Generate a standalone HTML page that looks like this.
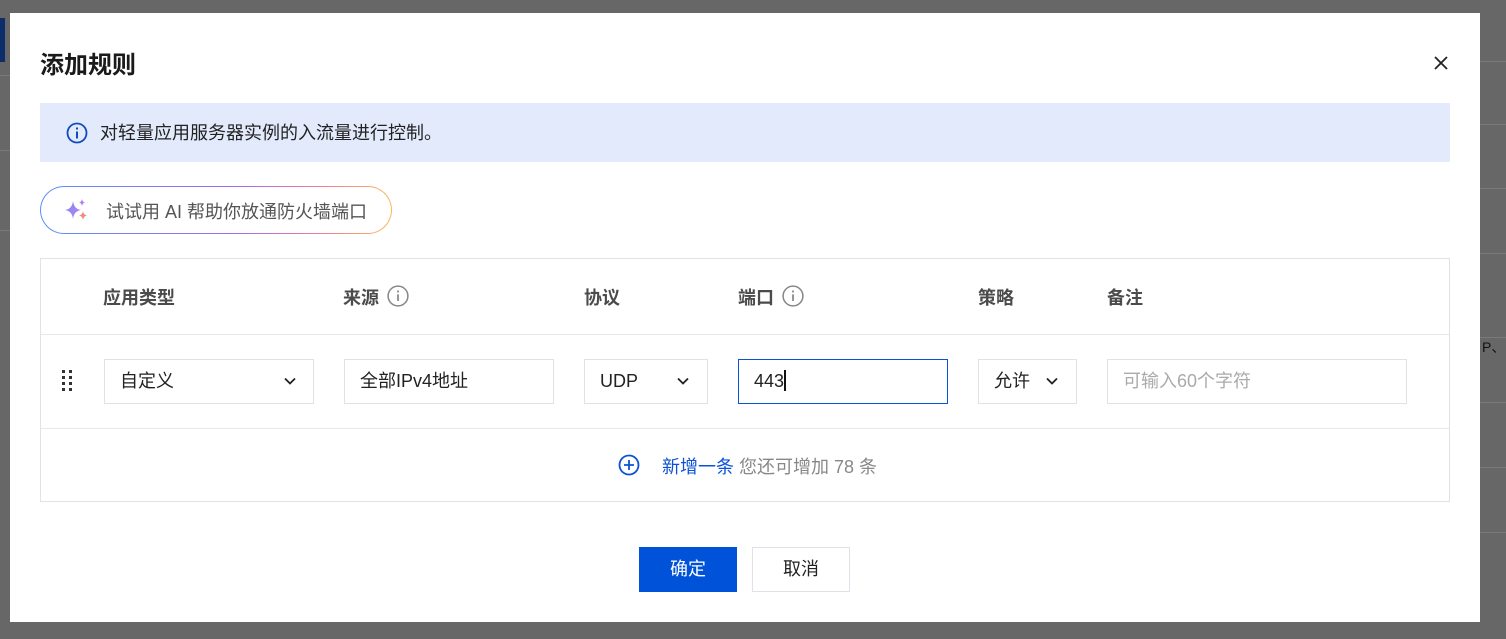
<!DOCTYPE html>
<html><head><meta charset="utf-8"><style>
*{box-sizing:border-box;margin:0;padding:0}
body{width:1506px;height:639px;background:#676767;position:relative;overflow:hidden;font-family:"Liberation Sans","Noto Sans CJK SC",sans-serif;color:#000}
.a{position:absolute}
.hl{position:absolute;height:1px;background:#7a7a7a}
.modal{left:10px;top:13px;width:1470px;height:609px;background:#fff}
.inp{position:absolute;height:45px;border:1px solid #dfe2e8;background:#fff;font-size:18px;color:#222;line-height:43px;padding-left:15px;white-space:nowrap}
.chev{position:absolute;top:14px;width:14px;height:14px}
.th{position:absolute;top:25px;font-size:18px;font-weight:bold;color:#4b4b4b;white-space:nowrap}
.info{display:inline-block;vertical-align:-3px;margin-left:8px}
</style></head><body>
<div class="a" style="left:0;top:18px;width:5px;height:44px;background:#0b2e6b"></div>
<div class="hl" style="left:0;top:75px;width:10px"></div>
<div class="hl" style="left:0;top:150px;width:10px"></div>
<div class="hl" style="left:0;top:230px;width:10px"></div>
<div class="hl" style="left:1480px;top:61px;width:26px"></div>
<div class="hl" style="left:1480px;top:124px;width:26px"></div>
<div class="hl" style="left:1480px;top:188px;width:26px"></div>
<div class="hl" style="left:1480px;top:253px;width:26px"></div>
<div class="hl" style="left:1480px;top:337px;width:26px"></div>
<div class="hl" style="left:1480px;top:402px;width:26px"></div>
<div class="hl" style="left:1480px;top:467px;width:26px"></div>
<div class="hl" style="left:1480px;top:532px;width:26px"></div>
<div class="a" style="left:1482px;top:337px;font-size:14px;color:#111;white-space:nowrap">P、 I</div>

<div class="a modal">
  <div class="a" style="left:30px;top:32px;font-size:24px;font-weight:bold;color:#1a1a1a">添加规则</div>
  <svg class="a" style="left:1424px;top:43px" width="14" height="14" viewBox="0 0 14 14"><path d="M1 1L13 13M13 1L1 13" stroke="#222" stroke-width="1.8"/></svg>
  <div class="a" style="left:30px;top:90px;width:1410px;height:59px;background:#e2eafc"></div>
  <svg class="a" style="left:56px;top:109px" width="22" height="22" viewBox="0 0 22 22"><circle cx="11" cy="11" r="9.5" fill="none" stroke="#0f4bbf" stroke-width="1.8"/><rect x="10" y="9.5" width="2" height="7" fill="#0f4bbf"/><rect x="10" y="5.5" width="2" height="2" fill="#0f4bbf"/></svg>
  <div class="a" style="left:90px;top:106px;font-size:18px;color:#222;white-space:nowrap">对轻量应用服务器实例的入流量进行控制。</div>

  <div class="a" style="left:30px;top:173px;width:352px;height:48px;border-radius:24px;background:linear-gradient(90deg,#5b8ef7,#9d6cf0 55%,#f07c9a 80%,#f9b85a);padding:1px">
    <div style="width:100%;height:100%;border-radius:23px;background:#fff"></div>
  </div>
  <svg class="a" style="left:52px;top:185px" width="30" height="26" viewBox="0 0 30 26"><defs><linearGradient id="g" x1="0" y1="0" x2="1" y2="1"><stop offset="0" stop-color="#6f8ff7"/><stop offset="1" stop-color="#c77cf0"/></linearGradient></defs><path d="M11 3Q12 11 19 12Q12 13 11 21Q10 13 3 12Q10 11 11 3Z" fill="url(#g)"/><path d="M20 1Q20.5 4 23 4.5Q20.5 5 20 8Q19.5 5 17 4.5Q19.5 4 20 1Z" fill="#b07cf0"/><path d="M21 13Q21.6 17 25 17.5Q21.6 18 21 22Q20.4 18 17 17.5Q20.4 17 21 13Z" fill="#f28a7c"/></svg>
  <div class="a" style="left:96px;top:185px;font-size:18px;color:#555;white-space:nowrap">试试用 AI 帮助你放通防火墙端口</div>

  <div class="a" style="left:30px;top:245px;width:1410px;height:244px;border:1px solid #dfe2e8">
    <div class="a" style="left:0;top:75px;width:1408px;height:1px;background:#e6e8ee"></div>
    <div class="a" style="left:0;top:169px;width:1408px;height:1px;background:#e6e8ee"></div>
    <div class="th" style="left:62px">应用类型</div>
    <div class="th" style="left:302px">来源<svg class="info" width="22" height="22" viewBox="0 0 20 20"><circle cx="10" cy="10" r="9" fill="none" stroke="#888" stroke-width="1.4"/><rect x="9.2" y="8.5" width="1.6" height="6" fill="#888"/><rect x="9.2" y="5" width="1.6" height="1.8" fill="#888"/></svg></div>
    <div class="th" style="left:543px">协议</div>
    <div class="th" style="left:697px">端口<svg class="info" width="22" height="22" viewBox="0 0 20 20"><circle cx="10" cy="10" r="9" fill="none" stroke="#888" stroke-width="1.4"/><rect x="9.2" y="8.5" width="1.6" height="6" fill="#888"/><rect x="9.2" y="5" width="1.6" height="1.8" fill="#888"/></svg></div>
    <div class="th" style="left:937px">策略</div>
    <div class="th" style="left:1066px">备注</div>

    <svg class="a" style="left:20px;top:111px" width="14" height="22" viewBox="0 0 14 22"><g fill="#333"><rect x="1" y="0" width="3" height="3"/><rect x="1" y="6" width="3" height="3"/><rect x="1" y="12" width="3" height="3"/><rect x="1" y="18" width="3" height="3"/><rect x="8" y="0" width="3" height="3"/><rect x="8" y="6" width="3" height="3"/><rect x="8" y="12" width="3" height="3"/><rect x="8" y="18" width="3" height="3"/></g></svg>
    <div class="inp" style="left:63px;top:100px;width:210px">自定义<svg class="chev" style="left:178px" viewBox="0 0 14 14"><path d="M2 4.5L7 9.5L12 4.5" fill="none" stroke="#222" stroke-width="1.8"/></svg></div>
    <div class="inp" style="left:303px;top:100px;width:210px">全部IPv4地址</div>
    <div class="inp" style="left:543px;top:100px;width:124px">UDP<svg class="chev" style="left:91px" viewBox="0 0 14 14"><path d="M2 4.5L7 9.5L12 4.5" fill="none" stroke="#222" stroke-width="1.8"/></svg></div>
    <div class="inp" style="left:697px;top:100px;width:210px;border-color:#0b52d6">443<span style="display:inline-block;width:2px;height:21px;background:#111;vertical-align:-4px"></span></div>
    <div class="inp" style="left:937px;top:100px;width:99px">允许<svg class="chev" style="left:66px" viewBox="0 0 14 14"><path d="M2 4.5L7 9.5L12 4.5" fill="none" stroke="#222" stroke-width="1.8"/></svg></div>
    <div class="inp" style="left:1066px;top:100px;width:300px;color:#aaa">可输入60个字符</div>

    <svg class="a" style="left:577px;top:195px" width="22" height="22" viewBox="0 0 22 22"><circle cx="11" cy="11" r="9.5" fill="none" stroke="#0b52d6" stroke-width="1.8"/><path d="M11 6V16M6 11H16" stroke="#0b52d6" stroke-width="1.8"/></svg>
    <div class="a" style="left:621px;top:194px;font-size:18px;color:#0b52d6;white-space:nowrap">新增一条 <span style="color:#888">您还可增加 78 条</span></div>
  </div>

  <div class="a" style="left:629px;top:534px;width:98px;height:45px;background:#0052d9;color:#fff;font-size:18px;text-align:center;line-height:45px">确定</div>
  <div class="a" style="left:742px;top:534px;width:98px;height:45px;border:1px solid #dfe2e8;color:#222;font-size:18px;text-align:center;line-height:43px">取消</div>
</div>
</body></html>
